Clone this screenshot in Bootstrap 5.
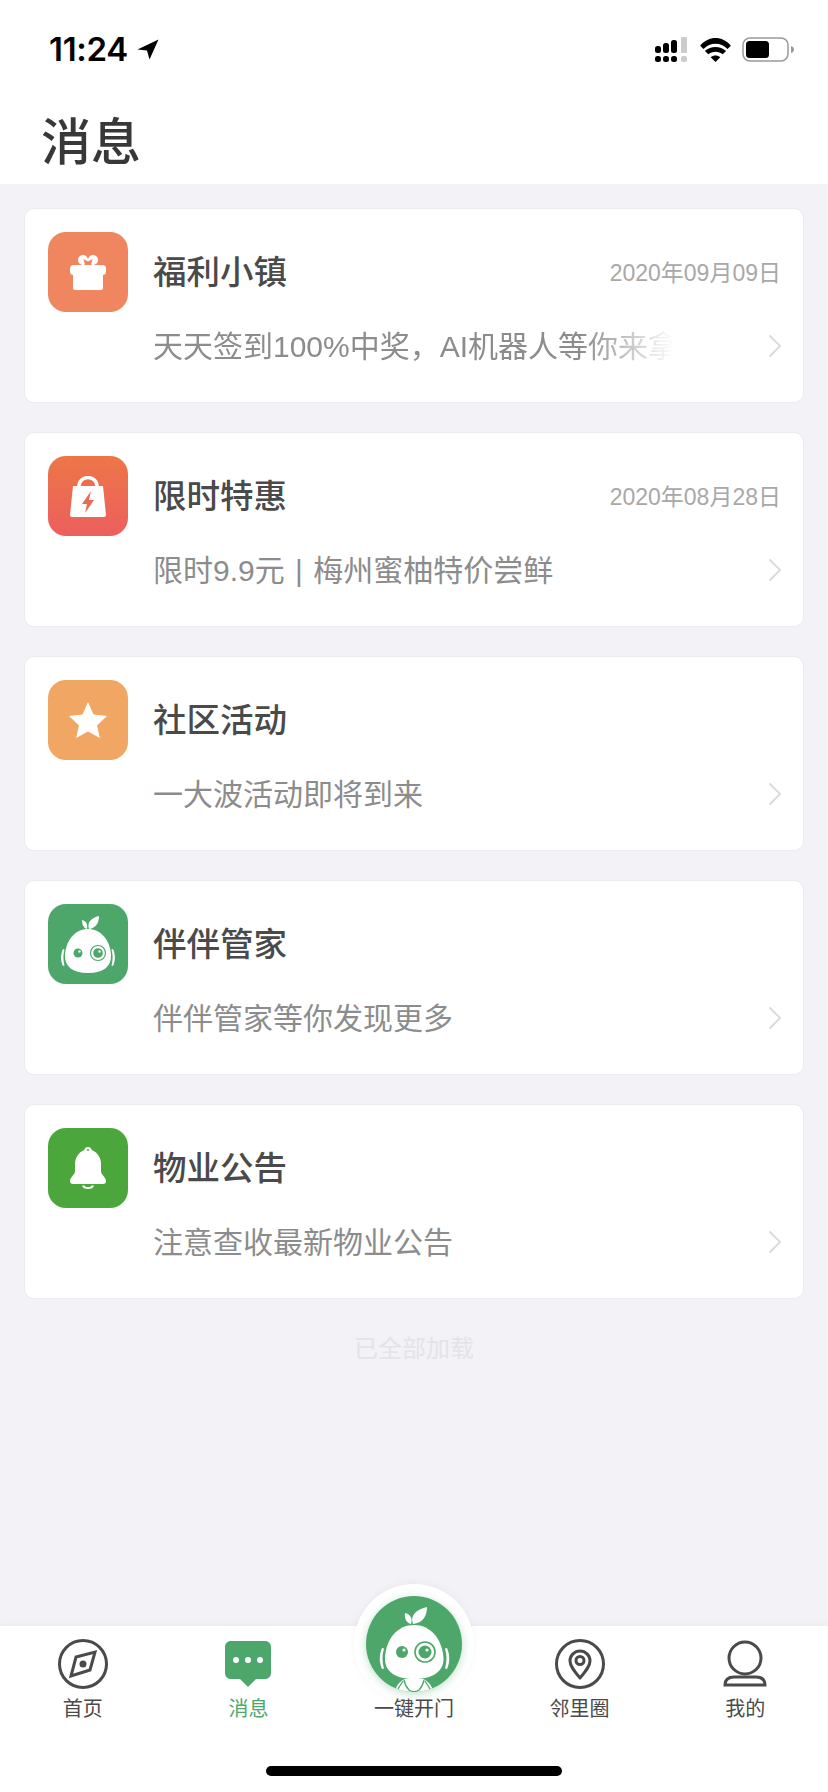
<!DOCTYPE html>
<html lang="zh-CN">
<head>
    <meta charset="UTF-8">
    <meta name="viewport" content="width=device-width, initial-scale=1.0">
    <title>消息</title>
    <link href="https://cdn.jsdelivr.net/npm/bootstrap@5.3.0/dist/css/bootstrap.min.css" rel="stylesheet">
    <style>
        body { background: #f2f2f7; font-family: "Liberation Sans", "Noto Sans CJK SC", sans-serif; width: 828px; height: 1792px; overflow: hidden; position: relative; }
        .top-area { height: 184px; background: #fff; }
        .status-row { height: 113px; padding: 29px 34px 0 49px; }
        .clock { font-family: "Inter", "Liberation Sans", sans-serif; font-size: 33px; font-weight: 600; line-height: 40px; color: #000; letter-spacing: -.3px; }
        .clock-arrow { margin-left: 9px; }
        .status-icons { margin-top: 8px; }
        .wifi-icon { margin-left: 12px; }
        .battery-icon { margin-left: 11px; }
        .page-title { font-size: 50px; font-weight: 500; line-height: 60px; color: #383838; margin: 0 0 0 41px; }
        .msg-list { padding: 24px 24px 0; gap: 29px; }
        .msg-card { height: 195px; background: #fff; border: 1px solid #ececf0; border-radius: 10px; padding: 23px 24px 0 23px; }
        .app-icon { width: 80px; height: 80px; border-radius: 18px; flex: none; }
        .bg-gift { background: #ef865f; }
        .bg-sale { background: linear-gradient(180deg, #ed7647, #ec5f5e); }
        .bg-star { background: #f2a663; }
        .bg-robot { background: #4ea76a; }
        .bg-bell { background: #4ba73c; }
        .msg-body { margin-left: 25px; min-width: 0; }
        .msg-name { font-size: 33.5px; font-weight: 500; line-height: 40px; color: #4a4a4a; margin-top: 21px; }
        .msg-date { font-size: 23px; line-height: 40px; color: #a8a8a8; margin-top: 21px; margin-right: -2px; }
        .msg-text { font-size: 30px; line-height: 40px; color: #8c8c8c; margin-top: 34px; white-space: nowrap; }
        .wide-words { word-spacing: 2px; }
        .fade-text { width: 521px; overflow: hidden; -webkit-mask-image: linear-gradient(90deg, #000 82%, transparent 100%); mask-image: linear-gradient(90deg, #000 82%, transparent 100%); }
        .chevron { flex: none; margin-top: 41px; margin-right: -3px; }
        .end-note { margin-top: 34px; font-size: 24px; line-height: 32px; color: #e4e4e6; text-align: center; }
        .tabbar { position: absolute; left: 0; right: 0; bottom: 0; height: 166px; background: #fff; box-shadow: 0 -2px 8px rgba(0,0,0,.04); }
        .tab-item { width: 166px; padding-top: 13px; font-size: 20px; line-height: 24px; color: #4a4a4a; text-align: center; }
        .tab-item svg { display: block; margin: 0 auto 8px; }
        .tab-active { color: #4ea76a; }
        .open-door { padding-top: 71px; }
        .door-label { position: relative; z-index: 2; }
        .door-btn { position: absolute; left: 354px; top: -42px; width: 120px; height: 120px; border-radius: 50%; background: #fff; display: flex; align-items: center; justify-content: center; box-shadow: 0 -2px 8px rgba(0,0,0,.04); }
        .door-face { width: 96px; height: 96px; border-radius: 50%; background: #4ea76a; box-shadow: 0 2px 8px rgba(78,167,106,.35); overflow: hidden; }
        .home-bar { position: absolute; left: 266px; bottom: 16px; width: 296px; height: 10px; border-radius: 5px; background: #000; }
    </style>
</head>
<body>
    <div class="top-area">
        <div class="status-row d-flex justify-content-between align-items-start">
            <div class="d-flex align-items-center">
                <span class="clock">11:24</span>
                <svg class="clock-arrow" width="22" height="21" viewBox="0 0 22 21"><path d="M21.500 .5 .5 10.500l9.500 1L12.500 20.500z" fill="#000"/></svg>
            </div>
            <div class="status-icons d-flex align-items-center">
                <svg width="33" height="25" viewBox="0 0 33 25">
                    <g fill="#000"><rect x="0" y="9" width="6" height="7" rx="2.500"/><rect x="8" y="6" width="6" height="10" rx="2.500"/><rect x="16" y="3" width="6" height="13" rx="2.500"/>
                    <rect x="0" y="19" width="6" height="6" rx="2.500"/><rect x="8" y="19" width="6" height="6" rx="2.500"/><rect x="16" y="19" width="6" height="6" rx="2.500"/></g>
                    <g fill="#ccc"><rect x="26" y="0" width="6" height="16" rx="1"/><rect x="26" y="19" width="6" height="6" rx="2"/></g>
                </svg>
                <svg class="wifi-icon" width="31" height="24" viewBox="0 0 32 25"><path d="M16 25 11 20c3-2.500 7-2.500 10 0zM8.500 17 5 13.500c6-5.500 16-5.500 22 0L23.500 17c-4-3.500-11-3.500-15 0zM3.500 11.500 0 8c9-10.500 23-10.500 32 0l-3.500 3.500c-7-7.500-18-7.500-25 0z" fill="#000"/></svg>
                <svg class="battery-icon" width="52" height="25" viewBox="0 0 52 25">
                    <rect x="1" y="1" width="45" height="23" rx="7" fill="none" stroke="#999" stroke-width="1.500"/>
                    <rect x="4" y="4" width="23" height="17" rx="3.500" fill="#000"/>
                    <path d="M49 9c2 .5 3 2 3 3.500s-1 3-3 3.500z" fill="#999"/>
                </svg>
            </div>
        </div>
        <h1 class="page-title">消息</h1>
    </div>

    <div class="msg-list d-flex flex-column">
        <div class="msg-card d-flex">
            <div class="app-icon bg-gift d-flex align-items-center justify-content-center">
                <svg width="36" height="35" viewBox="0 0 36 35">
                    <g fill="#fff"><circle cx="13" cy="5" r="5"/><circle cx="23" cy="5" r="5"/><rect x="0" y="10" width="36" height="10" rx="3.500"/><rect x="3" y="13" width="30" height="22" rx="2"/></g>
                    <path d="M13.500 4 18 6.500 22.500 4 21 10H15z" fill="#ef865f"/>
                </svg>
            </div>
            <div class="msg-body flex-grow-1">
                <div class="d-flex justify-content-between">
                    <div class="msg-name">福利小镇</div>
                    <div class="msg-date">2020年09月09日</div>
                </div>
                <div class="d-flex justify-content-between">
                    <div class="msg-text fade-text">天天签到100%中奖，AI机器人等你来拿</div>
                    <svg class="chevron" width="14" height="24" viewBox="0 0 14 24"><path d="M1.500 1.500 12 12 1.500 22.500" fill="none" stroke="#dcdcdc" stroke-width="2.200"/></svg>
                </div>
            </div>
        </div>

        <div class="msg-card d-flex">
            <div class="app-icon bg-sale d-flex align-items-center justify-content-center">
                <svg width="36" height="41" viewBox="0 0 36 41"><path d="M9 11V10a9 8.500 0 0 1 18 0v1" fill="none" stroke="#fff" stroke-width="3.500"/><path d="M3 10h30l3 29c0 1-1 2-2 2H2c-1 0-2-1-2-2z" fill="#fff"/><path d="M21 15 12 28h5l-2 9 9-13h-5z" fill="#ec6a54"/></svg>
            </div>
            <div class="msg-body flex-grow-1">
                <div class="d-flex justify-content-between">
                    <div class="msg-name">限时特惠</div>
                    <div class="msg-date">2020年08月28日</div>
                </div>
                <div class="d-flex justify-content-between">
                    <div class="msg-text wide-words">限时9.9元 | 梅州蜜柚特价尝鲜</div>
                    <svg class="chevron" width="14" height="24" viewBox="0 0 14 24"><path d="M1.500 1.500 12 12 1.500 22.500" fill="none" stroke="#dcdcdc" stroke-width="2.200"/></svg>
                </div>
            </div>
        </div>

        <div class="msg-card d-flex">
            <div class="app-icon bg-star d-flex align-items-center justify-content-center">
                <svg width="38" height="38" viewBox="0 0 38 38"><path d="M19 1l5.500 12.500L38 15l-10 9.500L30.800 37 19 30.500 7.200 37 10 24.500 0 15l13.500-1.500z" fill="#fff"/></svg>
            </div>
            <div class="msg-body flex-grow-1">
                <div class="msg-name">社区活动</div>
                <div class="d-flex justify-content-between">
                    <div class="msg-text">一大波活动即将到来</div>
                    <svg class="chevron" width="14" height="24" viewBox="0 0 14 24"><path d="M1.500 1.500 12 12 1.500 22.500" fill="none" stroke="#dcdcdc" stroke-width="2.200"/></svg>
                </div>
            </div>
        </div>

        <div class="msg-card d-flex">
            <div class="app-icon bg-robot">
                <svg width="80" height="80" viewBox="0 0 80 80">
                    <g fill="#fff">
                        <path d="M41 25c-2-7 2-11 10-13 0 7-3 12-10 13zM39 25c-3-1-5-4-5-9 4 1 6 4 5 9z"/>
                        <path d="M40 25C28 25 18 35 17 51c-.5 11 7 18 23 18s23.500-7 23-18C62 35 52 25 40 25z"/>
                        <path d="M15 45c-2.500 5-2.500 12 0 17l1.500-.5c-1.500-5-1.500-11 0-16zM65 45c2.500 5 2.500 12 0 17l-1.500-.5c1.500-5 1.500-11 0-16z"/>
                    </g>
                    <circle cx="30" cy="49" r="4.500" fill="#4ea76a"/><circle cx="31.500" cy="47.500" r="1.200" fill="#fff"/>
                    <circle cx="50" cy="49" r="7.500" fill="none" stroke="#4ea76a" stroke-width="1.200"/>
                    <circle cx="50" cy="49" r="4.800" fill="#4ea76a"/><circle cx="51.500" cy="47.500" r="1.200" fill="#fff"/>
                </svg>
            </div>
            <div class="msg-body flex-grow-1">
                <div class="msg-name">伴伴管家</div>
                <div class="d-flex justify-content-between">
                    <div class="msg-text">伴伴管家等你发现更多</div>
                    <svg class="chevron" width="14" height="24" viewBox="0 0 14 24"><path d="M1.500 1.500 12 12 1.500 22.500" fill="none" stroke="#dcdcdc" stroke-width="2.200"/></svg>
                </div>
            </div>
        </div>

        <div class="msg-card d-flex">
            <div class="app-icon bg-bell d-flex align-items-center justify-content-center">
                <svg width="36" height="42" viewBox="0 0 36 42"><path d="M18 0c2 0 3 1 4 3 6 3 9 8 9 14v7c0 4 5 6 5 10 0 2-1 3-3 3H3c-2 0-3-1-3-3 0-4 5-6 5-10v-7C5 11 8 6 14 3c1-2 2-3 4-3z" fill="#fff"/><circle cx="18" cy="3" r="1" fill="#4ba73c"/><path d="M12 38.500c.5 2.500 2.500 3.500 6 3.500s5.500-1 6-3.500h-2.500c-.5 1-1.500 1.500-3.500 1.500s-3-.5-3.500-1.500z" fill="#fff"/></svg>
            </div>
            <div class="msg-body flex-grow-1">
                <div class="msg-name">物业公告</div>
                <div class="d-flex justify-content-between">
                    <div class="msg-text">注意查收最新物业公告</div>
                    <svg class="chevron" width="14" height="24" viewBox="0 0 14 24"><path d="M1.500 1.500 12 12 1.500 22.500" fill="none" stroke="#dcdcdc" stroke-width="2.200"/></svg>
                </div>
            </div>
        </div>
    </div>
    <div class="end-note">已全部加载</div>

    <div class="tabbar d-flex">
        <div class="tab-item">
            <svg width="50" height="50" viewBox="0 0 50 50"><circle cx="25" cy="25" r="23.500" fill="none" stroke="#4a4a4a" stroke-width="3"/><path d="M37 13 32 31 13 37 18 18z" fill="none" stroke="#4a4a4a" stroke-width="3"/><circle cx="25" cy="25" r="3.500" fill="#4a4a4a"/></svg>
            首页
        </div>
        <div class="tab-item tab-active">
            <svg width="50" height="50" viewBox="0 0 50 50"><path d="M8 2h34c3.500 0 6 2.500 6 6v26c0 3.500-2.500 6-6 6H33l-8 8-8-8H8c-3.500 0-6-2.500-6-6V8c0-3.500 2.500-6 6-6z" fill="#4ea76a"/><g fill="#fff"><circle cx="13" cy="21" r="3"/><circle cx="25" cy="21" r="3"/><circle cx="37" cy="21" r="3"/></g></svg>
            消息
        </div>
        <div class="tab-item open-door"><span class="door-label">一键开门</span></div>
        <div class="tab-item">
            <svg width="50" height="50" viewBox="0 0 50 50"><circle cx="25" cy="25" r="23.500" fill="none" stroke="#4a4a4a" stroke-width="3"/><path d="M25 39c-6-7-10-12-10-17a10 10 0 0 1 20 0c0 5-4 10-10 17z" fill="none" stroke="#4a4a4a" stroke-width="3" stroke-linejoin="round"/><circle cx="25" cy="21.500" r="4" fill="none" stroke="#4a4a4a" stroke-width="3"/></svg>
            邻里圈
        </div>
        <div class="tab-item">
            <svg width="50" height="50" viewBox="0 0 50 50"><circle cx="25" cy="19" r="16" fill="none" stroke="#4a4a4a" stroke-width="3"/><path d="M5 46c0-6 4-8 9-8h22c5 0 9 2 9 8z" fill="none" stroke="#4a4a4a" stroke-width="3"/></svg>
            我的
        </div>
        <div class="door-btn">
            <div class="door-face">
                <svg width="96" height="96" viewBox="0 0 96 96">
                    <path d="M29 96c1-7 5-11 10-13h18c5 2 9 6 10 13z" fill="#fff"/>
                    <path d="M38 84c1 5 3 8 5 10 3 2 7 2 10 0 2-2 4-5 5-10M30 96l7-11M66 96l-7-11" fill="none" stroke="#4ea76a" stroke-width="1.300"/>
                    <g fill="#fff">
                        <path d="M47 28c-3-8 2-14 14-17 0 9-4 16-14 17zM45 28c-4-1-7-5-6-11 5 1 8 5 6 11z"/>
                        <path d="M48 29C32 29 20 42 19 62c-.5 14 11 21 29 21s30-7 29.500-21C76 42 64 29 48 29z"/>
                        <path d="M16 52c-3 7-3 14 0 21l2-.5c-2-7-2-13 0-20zM81 52c3 7 3 14 0 21l-2-.5c2-7 2-13 0-20z"/>
                    </g>
                    <circle cx="36" cy="56" r="6" fill="#4ea76a"/><circle cx="38" cy="54" r="1.600" fill="#fff"/>
                    <circle cx="59" cy="56" r="10" fill="none" stroke="#4ea76a" stroke-width="1.600"/>
                    <circle cx="59" cy="56" r="6.500" fill="#4ea76a"/><circle cx="61" cy="54" r="1.600" fill="#fff"/>
                </svg>
            </div>
        </div>
        <div class="home-bar"></div>
    </div>
</body>
</html>
